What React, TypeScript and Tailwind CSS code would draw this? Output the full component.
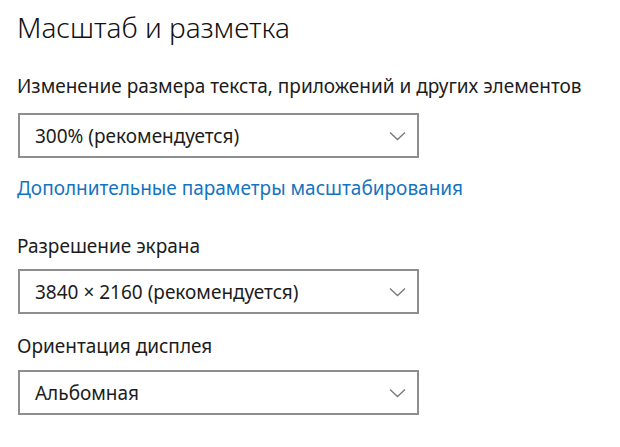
import React from 'react';

const Chevron = () => (
  <svg width="17" height="10" viewBox="0 0 17 10" fill="none" className="shrink-0">
    <path d="M1 1.5L8.5 8.5L16 1.5" stroke="#7a7a7a" strokeWidth="1.4" />
  </svg>
);

const Select = ({ value }: { value: string }) => (
  <div className="flex h-[45px] w-[401px] items-center justify-between border-2 border-[#8e8e8e] bg-white pl-[15px] pr-[11px]">
    <span className="text-[19px] leading-6 text-[#1c1c1c]">{value}</span>
    <Chevron />
  </div>
);

export default function App() {
  return (
    <div
      className="h-[447px] w-[620px] overflow-hidden bg-white pl-[17px] pt-[11px]"
      style={{ fontFamily: '"Noto Sans", "Open Sans", sans-serif' }}
    >
      <h1 className="text-[28px] font-light leading-8 text-[#111]">Масштаб и разметка</h1>

      <p className="mt-[31px] text-[19px] leading-6 text-[#1c1c1c]">
        Изменение размера текста, приложений и других элементов
      </p>
      <div className="mt-[15px] ml-px">
        <Select value="300% (рекомендуется)" />
      </div>

      <a className="mt-[18px] block text-[19px] leading-6 text-[#1574c0]">
        Дополнительные параметры масштабирования
      </a>

      <p className="mt-[34px] text-[19px] leading-6 text-[#1c1c1c]">Разрешение экрана</p>
      <div className="mt-[11px] ml-px">
        <Select value="3840 × 2160 (рекомендуется)" />
      </div>

      <p className="mt-[20px] text-[19px] leading-6 text-[#1c1c1c]">Ориентация дисплея</p>
      <div className="mt-[12px] ml-px">
        <Select value="Альбомная" />
      </div>
    </div>
  );
}
